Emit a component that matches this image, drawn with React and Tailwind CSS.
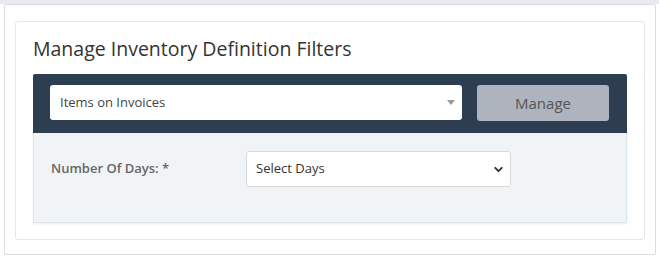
import { ChevronDown } from 'lucide-react';

export default function App() {
    return (
        <div className="w-[659px] h-[258px] bg-white font-['Open_Sans',sans-serif]">
            {/* top strip */}
            <div className="h-[4px] bg-[#e9e9f0]" />

            {/* outer box */}
            <div className="ml-[4px] w-[652px] h-[251px] border border-[#dcdcdc] rounded-[2px] pt-[16px] pl-[10px]">
                {/* card */}
                <div className="w-[630px] h-[219px] border border-[#e6e6e6] rounded-[3px] px-[17px] pt-[14px]">
                    <h2 className="text-[19.5px] leading-[26px] text-[#333] mb-[12px]">
                        Manage Inventory Definition Filters
                    </h2>

                    {/* dark bar */}
                    <div className="h-[59px] bg-[#2c3e50] rounded-t-[2px] flex items-start pt-[11px] pl-[17px] pr-[17px] gap-[15px]">
                        <div className="relative w-[412px] h-[35px] bg-white rounded-[3px] flex items-center pl-[10px]">
                            <span className="text-[13px] text-[#444]">Items on Invoices</span>
                            <span className="absolute right-[7px] top-[15px] w-0 h-0 border-l-[4px] border-r-[4px] border-t-[5px] border-l-transparent border-r-transparent border-t-[#999]" />
                        </div>
                        <button className="w-[132px] h-[36px] bg-[#adb4bd] rounded-[3px] text-[15px] text-[#555] flex items-center justify-center">
                            Manage
                        </button>
                    </div>

                    {/* light section */}
                    <div className="h-[90px] bg-[#f1f4f7] border border-t-0 border-[#dde3ea] shadow-[0_1px_2px_rgba(0,0,0,0.08)] flex items-start pt-[18px] pl-[17px]">
                        <div className="w-[195px] h-[36px] flex items-center">
                            <span className="text-[13px] font-semibold text-[#666]">Number Of Days: *</span>
                        </div>
                        <div className="relative w-[265px] h-[36px] bg-white border border-[#d9d9d9] rounded-[3px] flex items-center pl-[9px]">
                            <span className="text-[13px] text-[#333]">Select Days</span>
                            <ChevronDown size={13} strokeWidth={3.5} className="absolute right-[5px] top-[11px] text-[#333]" />
                        </div>
                    </div>
                </div>
            </div>
        </div>
    );
}
